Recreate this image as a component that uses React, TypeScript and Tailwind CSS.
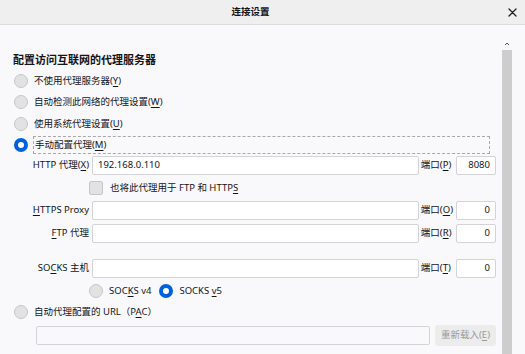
import React from "react";

function Key({ k }: { k: string }) {
  return <span className="underline underline-offset-[1.5px]">{k}</span>;
}

function Radio({ checked = false }: { checked?: boolean }) {
  return checked ? (
    <span className="block w-[14px] h-[14px] shrink-0 rounded-full border-[4px] border-[#0061e0] bg-white" />
  ) : (
    <span className="block w-[14px] h-[14px] shrink-0 rounded-full border border-[#c6c6c6] bg-[#e2e2e2]" />
  );
}

function Field({ value = "", right = false, disabled = false }: { value?: string; right?: boolean; disabled?: boolean }) {
  return (
    <div
      className={`h-[19px] flex items-center border border-[#d4d4d8] rounded-[2px] px-[5px] ${
        disabled ? "bg-[#f9f9fb]" : "bg-white"
      } ${right ? "justify-end" : ""}`}
    >
      {value}
    </div>
  );
}

export default function App() {
  return (
    <div className="w-[525px] h-[354px] overflow-hidden flex flex-col bg-[#f9f9fb] text-[#15141a] text-[9.5px] font-['Noto_Sans','Noto_Sans_CJK_SC',sans-serif]">
      {/* Title bar */}
      <div className="h-[25px] shrink-0 flex items-center bg-[#efefef] border-b border-[#dcdcdc]">
        <div className="flex-1 text-center font-semibold">连接设置</div>
        <div className="w-[22px] mr-[2px] flex justify-center">
          <svg width="9" height="9" viewBox="0 0 9 9" stroke="#222" strokeWidth="1.3" strokeLinecap="round">
            <path d="M1 1l7 7M8 1L1 8" />
          </svg>
        </div>
      </div>

      <div className="flex-1 flex">
        {/* Main */}
        <div className="flex-1 pl-[14px] pr-[6px] pt-[27px]">
          <div className="text-[11px] font-bold leading-[16px] -ml-[1px]">配置访问互联网的代理服务器</div>

          <div className="mt-[2.5px] flex flex-col">
            {[
              <>不使用代理服务器(<Key k="Y" />)</>,
              <>自动检测此网络的代理设置(<Key k="W" />)</>,
              <>使用系统代理设置(<Key k="U" />)</>,
            ].map((l, i) => (
              <div key={i} className="h-[21.3px] flex items-center gap-[5px]">
                <Radio />
                <span className="pl-[1px]">{l}</span>
              </div>
            ))}
            <div className="h-[21.3px] flex items-center gap-[5px]">
              <Radio checked />
              <span className="flex-1 h-[18px] flex items-center border border-dashed border-[#a8a8a8] pl-[1px] mr-[6px]">
                手动配置代理(<Key k="M" />)
              </span>
            </div>
          </div>

          {/* Manual proxy grid */}
          <div className="grid grid-cols-[75px_1fr_auto_40px] gap-x-[3px] items-center">
            <div className="text-right">
              HTTP 代理(<Key k="X" />)
            </div>
            <Field value="192.168.0.110" />
            <div className="-ml-[1px]">端口(<Key k="P" />)</div>
            <Field value="8080" right />

            <div />
            <div className="col-span-3 h-[26px] flex items-center gap-[7px]">
              <span className="w-[14px] h-[14px] -ml-[3px] rounded-[2px] border border-[#c6c6c6] bg-[#e2e2e2]" />
              <span>
                也将此代理用于 FTP 和 HTTP<Key k="S" />
              </span>
            </div>

            <div className="text-right">
              <Key k="H" />TTPS Proxy
            </div>
            <Field />
            <div className="-ml-[1px]">端口(<Key k="O" />)</div>
            <Field value="0" right />

            <div className="text-right mt-[4px]">
              <Key k="F" />TP 代理
            </div>
            <div className="mt-[4px]"><Field /></div>
            <div className="mt-[4px] -ml-[1px]">端口(<Key k="R" />)</div>
            <div className="mt-[4px]"><Field value="0" right /></div>

            <div className="text-right mt-[16px]">
              SO<Key k="C" />KS 主机
            </div>
            <div className="mt-[16px]"><Field /></div>
            <div className="mt-[16px] -ml-[1px]">端口(<Key k="T" />)</div>
            <div className="mt-[16px]"><Field value="0" right /></div>

            <div />
            <div className="col-span-3 mt-[3px] h-[21px] flex items-center -ml-[3px]">
              <Radio />
              <span className="ml-[6px]">
                SOC<Key k="K" />S v4
              </span>
              <span className="ml-[8px]">
                <Radio checked />
              </span>
              <span className="ml-[6px]">
                SOCKS <Key k="v" />5
              </span>
            </div>
          </div>

          <div className="h-[21px] flex items-center gap-[5px]">
            <Radio />
            <span className="pl-[1px]">
              自动代理配置的 URL（P<Key k="A" />C）
            </span>
          </div>

          <div className="mt-[2px] ml-[22px] flex items-center gap-[5px]">
            <div className="flex-1">
              <Field disabled />
            </div>
            <div className="h-[21px] w-[61px] flex items-center justify-center rounded-[3px] bg-[#ececec] text-[#9a9a9a]">
              重新载入(<Key k="E" />)
            </div>
          </div>
        </div>

        {/* Scrollbar */}
        <div className="w-[10px] flex flex-col items-center pt-[16px]">
          <svg width="8" height="6" viewBox="0 0 8 6" fill="none" stroke="#555" strokeWidth="1">
            <path d="M2 4l2-2 2 2" />
          </svg>
          <div className="mt-[3px] w-full flex-1 bg-[#cdcdcd]" />
        </div>
        <div className="w-[13px]" />
      </div>
    </div>
  );
}
